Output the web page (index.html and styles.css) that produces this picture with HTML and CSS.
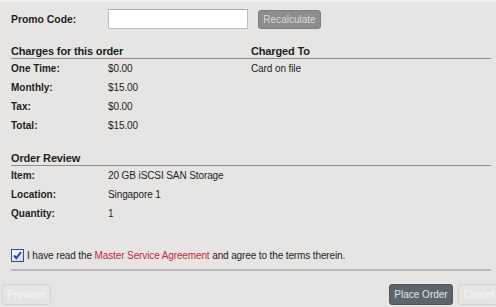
FILE: index.html
```html
<!DOCTYPE html>
<html>
<head>
<meta charset="utf-8">
<link rel="stylesheet" href="styles.css">
</head>
<body>
<div class="frame">
  <div class="content">
    <div class="promo">
      <span class="label">Promo Code:</span>
      <input class="promo-input" type="text">
      <button class="btn btn-gray">Recalculate</button>
    </div>

    <div class="sections">
      <div class="section">
        <h3 class="heading">Charges for this order</h3>
        <div class="rows">
          <span class="label">One Time:</span><span class="value">$0.00</span>
          <span class="label">Monthly:</span><span class="value">$15.00</span>
          <span class="label">Tax:</span><span class="value">$0.00</span>
          <span class="label">Total:</span><span class="value">$15.00</span>
        </div>
      </div>
      <div class="section">
        <h3 class="heading">Charged To</h3>
        <div class="plain">Card on file</div>
      </div>
    </div>

    <div class="section review">
      <h3 class="heading">Order Review</h3>
      <div class="rows">
        <span class="label">Item:</span><span class="value">20 GB iSCSI SAN Storage</span>
        <span class="label">Location:</span><span class="value">Singapore 1</span>
        <span class="label">Quantity:</span><span class="value">1</span>
      </div>
    </div>

    <div class="agree">
      <svg class="check" width="13" height="13" viewBox="0 0 13 13">
        <defs>
          <linearGradient id="cb" x1="0" y1="0" x2="1" y2="1">
            <stop offset="0" stop-color="#ffffff"/>
            <stop offset="1" stop-color="#c9d8ee"/>
          </linearGradient>
        </defs>
        <rect x="0.5" y="0.5" width="12" height="12" fill="url(#cb)" stroke="#2f4f86"/>
        <path d="M3 6.5 L5.3 9.2 L10 3.2" fill="none" stroke="#1d4fb0" stroke-width="2"/>
      </svg>
      <span class="agree-text">I have read the <span class="link">Master Service Agreement</span> and agree to the terms therein.</span>
    </div>
  </div>

  <div class="footer">
    <button class="btn btn-ghost">Previous</button>
    <div class="footer-right">
      <button class="btn btn-dark">Place Order</button>
      <button class="btn btn-ghost btn-cancel">Cancel</button>
    </div>
  </div>
</div>
</body>
</html>
```

FILE: styles.css
```css
html, body {
  margin: 0;
  padding: 0;
  background: #e7e5e3;
}

body {
  font-family: "Liberation Sans", Arial, sans-serif;
  color: #1e1e1e;
  width: 496px;
  height: 307px;
  overflow: hidden;
}

.frame {
  border-top: 2px solid #f1f0ef;
  height: 305px;
  display: flex;
  flex-direction: column;
}

.content {
  padding: 7px 5px 0 11px;
}

.label {
  font-weight: bold;
  font-size: 10px;
}

.value, .plain {
  font-size: 10px;
  letter-spacing: -0.1px;
}

.promo {
  display: flex;
  align-items: center;
  height: 20px;
}

.promo .label {
  width: 97px;
  font-size: 10.4px;
}

.promo-input {
  box-sizing: border-box;
  width: 140px;
  height: 20px;
  margin: 0;
  border: 1px solid #b9bdcc;
  border-top-color: #a9adbd;
  background: #ffffff;
  padding: 0 3px;
}

.btn {
  font-family: "Liberation Sans", Arial, sans-serif;
  font-size: 10px;
  box-sizing: border-box;
  height: 20px;
  border-radius: 3px;
  padding: 0 4px;
  margin: 0;
  white-space: nowrap;
  flex-shrink: 0;
  cursor: default;
}

.btn-gray {
  margin-left: 10px;
  width: 63px;
  height: 19px;
  background: #8b8d8f;
  border: 1px solid #7c7e80;
  color: #dcdcdc;
}

.sections {
  display: grid;
  grid-template-columns: 240px 240px;
  margin-top: 16px;
}

.heading {
  margin: 0;
  font-size: 11px;
  letter-spacing: -0.15px;
  line-height: 13px;
  font-weight: bold;
  border-bottom: 1px solid #8e8e8e;
}

.rows {
  display: grid;
  grid-template-columns: 97px 1fr;
  grid-auto-rows: 19px;
  align-items: center;
}

.plain {
  line-height: 19px;
}

.review {
  margin-top: 17px;
}

.agree {
  display: flex;
  align-items: center;
  gap: 3px;
  margin-top: 25px;
  height: 14px;
  padding-bottom: 7px;
  border-bottom: 2px solid #b8b8b8;
}

.check {
  display: block;
}

.agree-text {
  font-size: 10px;
  letter-spacing: -0.12px;
}

.link {
  color: #c42a3a;
}

.footer {
  display: flex;
  justify-content: space-between;
  align-items: flex-start;
  padding: 13px 0 0 2px;
  margin-right: -4px;
}

.footer-right {
  display: flex;
  gap: 5px;
}

.btn-ghost {
  background: transparent;
  border: 1px solid #d3d3d3;
  color: #f6f6f6;
  width: 49px;
  height: 21px;
}

.btn-dark {
  background: #5e656a;
  border: 1px solid #4f5559;
  color: #e2e4e6;
  width: 64px;
  height: 21px;
}

.btn-cancel {
  width: 42px;
}
```
